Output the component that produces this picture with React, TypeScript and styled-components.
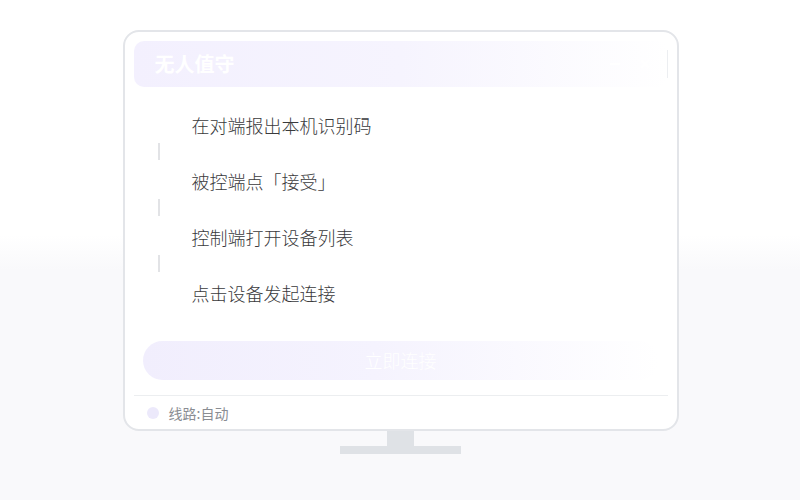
import React from "react";
import styled, { createGlobalStyle } from "styled-components";

const GlobalStyle = createGlobalStyle`
  html, body {
    margin: 0;
    padding: 0;
  }
  body {
    font-family: "Noto Sans", "Noto Sans CJK SC", sans-serif;
    background: linear-gradient(to bottom, #ffffff 0, #ffffff 235px, #f9f9fb 270px, #f9f9fb 100%);
    min-height: 500px;
  }
`;

const steps = [
  "在对端报出本机识别码",
  "被控端点「接受」",
  "控制端打开设备列表",
  "点击设备发起连接",
];

const App = () => {
  return (
    <>
      <GlobalStyle />
      <Page>
        <Monitor>
          <Header>
            <Title>无人值守</Title>
            <HeaderTools>
              <ToolIcon viewBox="0 0 16 16">
                <path d="M3 8h10" />
              </ToolIcon>
              <ToolIcon viewBox="0 0 16 16">
                <path d="M4 4l8 8M12 4l-8 8" />
              </ToolIcon>
              <ToolDivider />
            </HeaderTools>
          </Header>

          <Steps>
            {steps.map((s, i) => (
              <React.Fragment key={s}>
                <StepRow>{s}</StepRow>
                {i < steps.length - 1 && <Connector />}
              </React.Fragment>
            ))}
          </Steps>

          <ConnectButton>立即连接</ConnectButton>

          <Footer>
            <Dot />
            <FooterText>线路:自动</FooterText>
          </Footer>
        </Monitor>
        <Neck />
        <Base />
      </Page>
    </>
  );
};

export default App;

const Page = styled.div`
  display: flex;
  flex-direction: column;
  align-items: center;
  padding-top: 30px;
`;

const Monitor = styled.div`
  box-sizing: border-box;
  width: 556px;
  height: 401px;
  margin-left: 1px;
  border: 2px solid #e3e5e9;
  border-radius: 16px;
  background: #ffffff;
  padding: 9px 9px 0 9px;
  display: flex;
  flex-direction: column;
`;

const Header = styled.div`
  height: 46px;
  border-radius: 10px;
  background: linear-gradient(to right, #f3f0fe 0%, #f6f4fe 50%, #ffffff 100%);
  display: flex;
  align-items: center;
  justify-content: space-between;
  padding-left: 21px;
`;

const Title = styled.div`
  color: #ffffff;
  font-size: 20px;
  font-weight: 700;
  font-family: "Noto Sans CJK SC", sans-serif;
`;

const HeaderTools = styled.div`
  display: flex;
  align-items: center;
  gap: 14px;
  height: 100%;
`;

const ToolIcon = styled.svg`
  width: 16px;
  height: 16px;
  fill: none;
  stroke: #ffffff;
  stroke-width: 2;
`;

const ToolDivider = styled.div`
  width: 1px;
  height: 28px;
  background: #eceef1;
`;

const Steps = styled.div`
  margin-top: 26px;
  display: flex;
  flex-direction: column;
`;

const StepRow = styled.div`
  padding-left: 58px;
  font-size: 18px;
  line-height: 24px;
  color: #3a3a3c;
  font-family: "Noto Sans CJK SC", sans-serif;
  font-weight: 300;
`;

const Connector = styled.div`
  width: 2px;
  height: 17px;
  margin: 6px 0 9px 24px;
  background: #e2e3e6;
`;

const ConnectButton = styled.div`
  margin: 36px 9px 0 9px;
  height: 40px;
  border-radius: 20px;
  background: linear-gradient(to right, #f1eefd 0%, #f5f3fe 45%, #ffffff 100%);
  color: #ffffff;
  font-size: 18px;
  font-family: "Noto Sans CJK SC", sans-serif;
  font-weight: 300;
  display: flex;
  align-items: center;
  justify-content: center;
`;

const Footer = styled.div`
  margin-top: 15px;
  border-top: 1px solid #eceef0;
  height: 33px;
  display: flex;
  align-items: center;
  gap: 10px;
  padding-left: 13px;
`;

const Dot = styled.div`
  width: 12px;
  height: 12px;
  border-radius: 50%;
  background: #ece9fb;
`;

const FooterText = styled.div`
  font-size: 14px;
  color: #8a8d93;
  font-family: "Noto Sans CJK SC", sans-serif;
`;

const Neck = styled.div`
  width: 27px;
  height: 15px;
  background: #dfe2e6;
`;

const Base = styled.div`
  width: 121px;
  height: 8px;
  background: #dfe2e6;
`;
